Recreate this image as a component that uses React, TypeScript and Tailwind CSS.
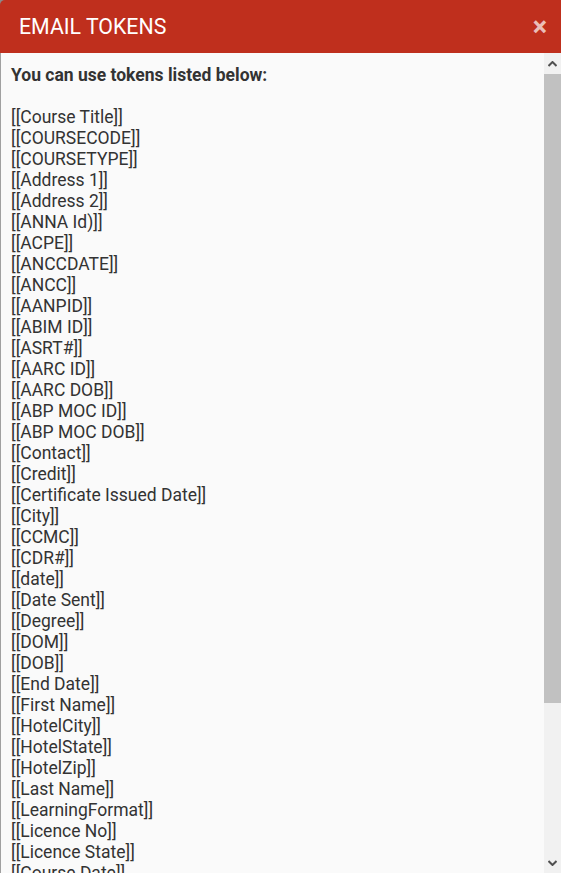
const tokens = [
  "Course Title",
  "COURSECODE",
  "COURSETYPE",
  "Address 1",
  "Address 2",
  "ANNA Id)",
  "ACPE",
  "ANCCDATE",
  "ANCC",
  "AANPID",
  "ABIM ID",
  "ASRT#",
  "AARC ID",
  "AARC DOB",
  "ABP MOC ID",
  "ABP MOC DOB",
  "Contact",
  "Credit",
  "Certificate Issued Date",
  "City",
  "CCMC",
  "CDR#",
  "date",
  "Date Sent",
  "Degree",
  "DOM",
  "DOB",
  "End Date",
  "First Name",
  "HotelCity",
  "HotelState",
  "HotelZip",
  "Last Name",
  "LearningFormat",
  "Licence No",
  "Licence State",
  "Course Date",
  "Middle Name",
  "Phone",
];

export default function App() {
  return (
    <div
      className="w-[561px] h-[873px] bg-[#8a8a8a] flex flex-col overflow-hidden"
      style={{ fontFamily: "Roboto, 'Liberation Sans', sans-serif" }}
    >
      <div className="h-[53px] shrink-0 bg-[#bf2f1d] rounded-tl-[5px] flex items-center justify-between pl-[19px] pr-[14px]">
        <h1 className="text-white text-[21.3px] leading-none mt-[1px]">EMAIL TOKENS</h1>
        <button className="text-white/70 text-[27px] font-bold leading-none mt-[1px]">×</button>
      </div>
      <div className="flex-1 flex min-h-0 bg-[#fafafa] border-l border-[#a0a0a0]">
        <div className="flex-1 overflow-hidden pt-[12px] pl-[10px] text-[#333] text-[17.5px] leading-[21px]">
          <p className="font-bold">You can use tokens listed below:</p>
          <div className="h-[21px]" />
          {tokens.map((t) => (
            <div key={t} className="whitespace-nowrap">[[{t}]]</div>
          ))}
        </div>
        <div className="w-[17px] shrink-0 bg-[#f1f1f1] flex flex-col">
          <div className="h-[21px] flex items-center justify-center">
            <svg width="9" height="6" viewBox="0 0 9 6">
              <path d="M0.5 5 L4.5 1 L8.5 5" fill="none" stroke="#505050" strokeWidth="2" />
            </svg>
          </div>
          <div className="h-[629px] bg-[#c1c1c1]" />
          <div className="flex-1" />
          <div className="h-[21px] flex items-center justify-center">
            <svg width="9" height="6" viewBox="0 0 9 6">
              <path d="M0.5 1 L4.5 5 L8.5 1" fill="none" stroke="#505050" strokeWidth="2" />
            </svg>
          </div>
        </div>
      </div>
    </div>
  );
}
